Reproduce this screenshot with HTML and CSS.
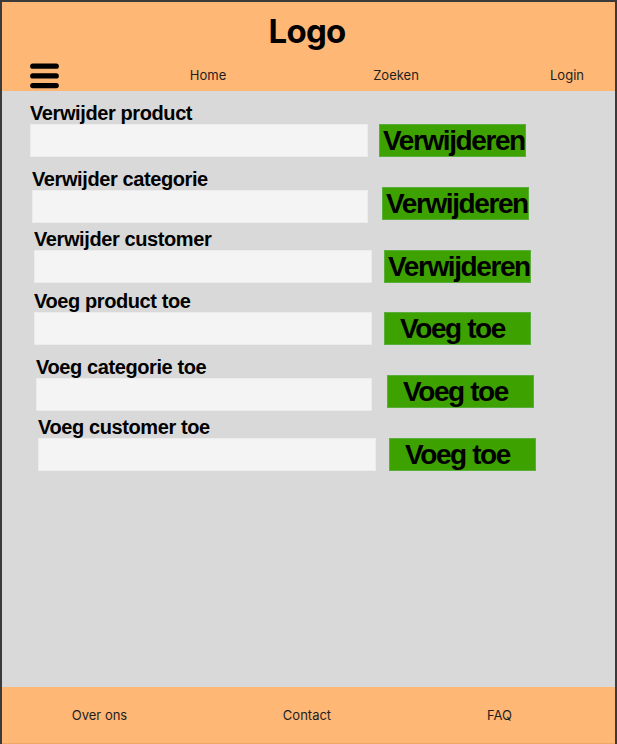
FILE: index.html
```html
<!DOCTYPE html>
<html lang="nl">
<head>
<meta charset="utf-8">
<title>Beheer</title>
<link rel="stylesheet" href="styles.css">
</head>
<body>
<div class="page">
  <header class="header">
    <div class="logo">Logo</div>
    <nav class="nav">
      <div class="nav-menu">
        <svg class="burger" width="30" height="26" viewBox="0 0 30 26" aria-hidden="true">
          <line x1="2.75" y1="3.2" x2="26.25" y2="3.2"/>
          <line x1="2.75" y1="12.9" x2="26.25" y2="12.9"/>
          <line x1="2.75" y1="22.6" x2="26.25" y2="22.6"/>
        </svg>
      </div>
      <a class="nav-link">Home</a>
      <a class="nav-link">Zoeken</a>
      <a class="nav-link nav-last">Login</a>
    </nav>
  </header>

  <main class="main">
    <div class="field">
      <label class="label">Verwijder product</label>
      <div class="row">
        <input class="input" type="text">
        <button class="btn">Verwijderen</button>
      </div>
    </div>
    <div class="field">
      <label class="label">Verwijder categorie</label>
      <div class="row">
        <input class="input" type="text">
        <button class="btn btn-raised">Verwijderen</button>
      </div>
    </div>
    <div class="field">
      <label class="label">Verwijder customer</label>
      <div class="row">
        <input class="input" type="text">
        <button class="btn">Verwijderen</button>
      </div>
    </div>
    <div class="field">
      <label class="label">Voeg product toe</label>
      <div class="row">
        <input class="input" type="text">
        <button class="btn btn-add">Voeg toe</button>
      </div>
    </div>
    <div class="field">
      <label class="label">Voeg categorie toe</label>
      <div class="row">
        <input class="input" type="text">
        <button class="btn btn-add btn-raised">Voeg toe</button>
      </div>
    </div>
    <div class="field">
      <label class="label">Voeg customer toe</label>
      <div class="row">
        <input class="input" type="text">
        <button class="btn btn-add">Voeg toe</button>
      </div>
    </div>
  </main>

  <footer class="footer">
    <a class="foot-link">Over ons</a>
    <a class="foot-link">Contact</a>
    <a class="foot-link foot-last">FAQ</a>
  </footer>
</div>
</body>
</html>
```

FILE: styles.css
```css
* { box-sizing: border-box; }

html, body {
  margin: 0;
  padding: 0;
}

body {
  width: 617px;
  height: 744px;
  font-family: "Inter", "Liberation Sans", sans-serif;
  color: #000;
}

.page {
  width: 617px;
  height: 744px;
  display: flex;
  flex-direction: column;
  border: 2px solid #3a3a3a;
  border-bottom: 0;
  background: #d9d9d9;
}

/* Header */
.header {
  background: #ffb775;
  height: 89px;
  padding-top: 9px;
  display: flex;
  flex-direction: column;
}

.logo {
  text-align: center;
  font-family: "Inter", sans-serif;
  font-weight: 700;
  font-size: 33px;
  letter-spacing: -0.8px;
  line-height: 40px;
  height: 40px;
  padding-right: 3px;
}

.nav {
  margin-top: 9px;
  height: 29px;
  display: grid;
  grid-template-columns: 112px 188px 188px 1fr;
  align-items: center;
}

.nav-menu {
  padding-left: 28px;
  padding-top: 2px;
  display: flex;
  align-items: center;
}

.burger line {
  stroke: #000;
  stroke-width: 5.2;
  stroke-linecap: round;
}

.nav-link {
  text-align: center;
  font-size: 13px;
  line-height: 16px;
  color: #1e1e1e;
}

.nav-last {
  padding-left: 29px;
}

/* Main */
.main {
  flex: 1;
  padding-top: 12px;
  display: flex;
  flex-direction: column;
}

.field {
  display: flex;
  flex-direction: column;
  font-family: "Liberation Sans", Arial, sans-serif;
}

.label {
  font-weight: 700;
  font-size: 20px;
  letter-spacing: -0.4px;
  line-height: 20px;
  height: 20px;
  margin-bottom: 1px;
  white-space: nowrap;
}

.row {
  display: flex;
  align-items: flex-start;
  gap: 11px;
}

.input {
  width: 338px;
  height: 33px;
  margin: 0;
  padding: 0 6px;
  background: #f4f4f4;
  border: 1px solid #ececec;
  border-radius: 0;
  outline: none;
  font: inherit;
}

.btn {
  width: 147px;
  height: 33px;
  margin: 0;
  padding: 0 0 0 3px;
  background: #3da200;
  border: 1px solid #5aae3c;
  border-radius: 0;
  font-family: "Liberation Sans", Arial, sans-serif;
  font-weight: 700;
  font-size: 28px;
  letter-spacing: -1.4px;
  line-height: 31px;
  color: #000;
  text-align: left;
  white-space: nowrap;
  overflow: hidden;
}

.btn-add {
  padding-left: 15px;
}

.btn-raised {
  margin-top: -3px;
}

/* per-row drift */
.field:nth-child(1) { margin-left: 28px; }
.field:nth-child(2) { margin-left: 30px; margin-top: 12px; }
.field:nth-child(3) { margin-left: 32px; margin-top: 6px; }
.field:nth-child(4) { margin-left: 32px; margin-top: 8px; }
.field:nth-child(5) { margin-left: 34px; margin-top: 12px; }
.field:nth-child(6) { margin-left: 36px; margin-top: 6px; }

.field:nth-child(2) .row { gap: 14px; }
.field:nth-child(2) .input { width: 336px; }
.field:nth-child(3) .row { gap: 12px; }
.field:nth-child(4) .row { gap: 12px; }
.field:nth-child(5) .row { gap: 15px; }
.field:nth-child(5) .input { width: 336px; }
.field:nth-child(6) .row { gap: 13px; }

/* Footer */
.footer {
  height: 57px;
  background: #ffb775;
  border-bottom: 1px solid #eda766;
  display: grid;
  grid-template-columns: 195px 220px 1fr;
  align-items: center;
}

.foot-link {
  text-align: center;
  font-size: 13px;
  line-height: 16px;
  color: #1e1e1e;
}

.foot-last {
  padding-right: 33px;
}
```
